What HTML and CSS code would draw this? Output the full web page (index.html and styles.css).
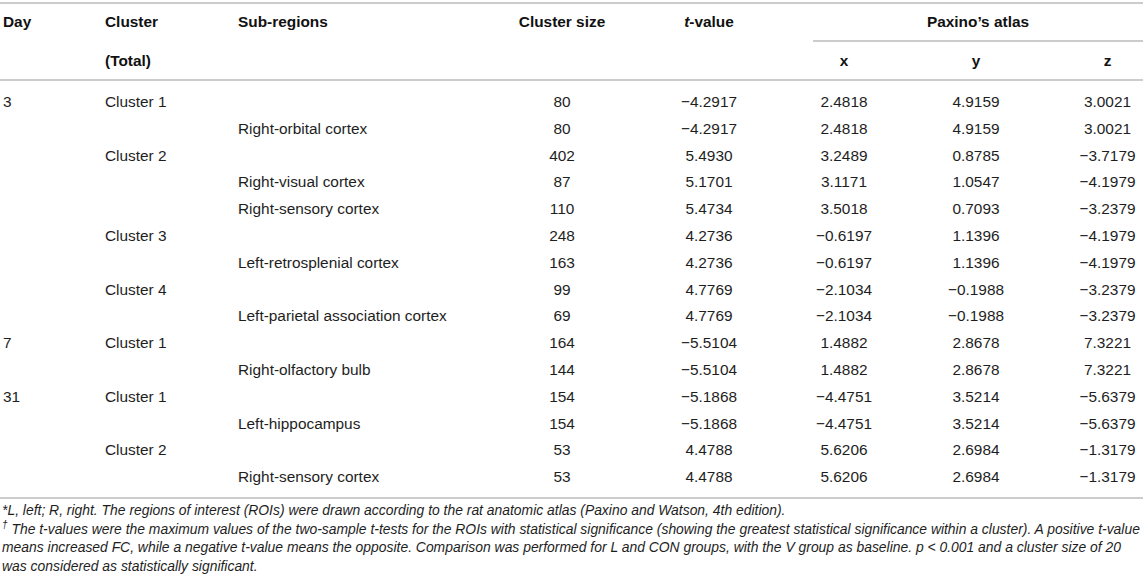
FILE: index.html
```html
<!DOCTYPE html>
<html lang="en">
<head>
<meta charset="utf-8">
<title>Table</title>
<link rel="stylesheet" href="styles.css">
</head>
<body>
<table class="data">
  <colgroup>
    <col class="c-day"><col class="c-cluster"><col class="c-sub"><col class="c-size"><col class="c-t"><col class="c-x"><col class="c-y"><col class="c-z">
  </colgroup>
  <thead>
    <tr class="h1">
      <th class="left pad-day">Day</th>
      <th class="left">Cluster</th>
      <th class="left">Sub-regions</th>
      <th class="ctr">Cluster size</th>
      <th class="ctr col-t"><i>t</i>-value</th>
      <th class="ctr atlas" colspan="3">Paxino’s atlas</th>
    </tr>
    <tr class="h2">
      <th class="left pad-day"></th>
      <th class="left">(Total)</th>
      <th></th>
      <th></th>
      <th class="col-t"></th>
      <th class="ctr col-x">x</th>
      <th class="ctr">y</th>
      <th class="ctr col-z">z</th>
    </tr>
  </thead>
  <tbody>
    <tr><td class="pad-day">3</td><td>Cluster 1</td><td></td><td class="ctr">80</td><td class="ctr col-t">−4.2917</td><td class="ctr col-x">2.4818</td><td class="ctr">4.9159</td><td class="ctr col-z">3.0021</td></tr>
    <tr><td class="pad-day"></td><td></td><td>Right-orbital cortex</td><td class="ctr">80</td><td class="ctr col-t">−4.2917</td><td class="ctr col-x">2.4818</td><td class="ctr">4.9159</td><td class="ctr col-z">3.0021</td></tr>
    <tr><td class="pad-day"></td><td>Cluster 2</td><td></td><td class="ctr">402</td><td class="ctr col-t">5.4930</td><td class="ctr col-x">3.2489</td><td class="ctr">0.8785</td><td class="ctr col-z">−3.7179</td></tr>
    <tr><td class="pad-day"></td><td></td><td>Right-visual cortex</td><td class="ctr">87</td><td class="ctr col-t">5.1701</td><td class="ctr col-x">3.1171</td><td class="ctr">1.0547</td><td class="ctr col-z">−4.1979</td></tr>
    <tr><td class="pad-day"></td><td></td><td>Right-sensory cortex</td><td class="ctr">110</td><td class="ctr col-t">5.4734</td><td class="ctr col-x">3.5018</td><td class="ctr">0.7093</td><td class="ctr col-z">−3.2379</td></tr>
    <tr><td class="pad-day"></td><td>Cluster 3</td><td></td><td class="ctr">248</td><td class="ctr col-t">4.2736</td><td class="ctr col-x">−0.6197</td><td class="ctr">1.1396</td><td class="ctr col-z">−4.1979</td></tr>
    <tr><td class="pad-day"></td><td></td><td>Left-retrosplenial cortex</td><td class="ctr">163</td><td class="ctr col-t">4.2736</td><td class="ctr col-x">−0.6197</td><td class="ctr">1.1396</td><td class="ctr col-z">−4.1979</td></tr>
    <tr><td class="pad-day"></td><td>Cluster 4</td><td></td><td class="ctr">99</td><td class="ctr col-t">4.7769</td><td class="ctr col-x">−2.1034</td><td class="ctr">−0.1988</td><td class="ctr col-z">−3.2379</td></tr>
    <tr><td class="pad-day"></td><td></td><td>Left-parietal association cortex</td><td class="ctr">69</td><td class="ctr col-t">4.7769</td><td class="ctr col-x">−2.1034</td><td class="ctr">−0.1988</td><td class="ctr col-z">−3.2379</td></tr>
    <tr><td class="pad-day">7</td><td>Cluster 1</td><td></td><td class="ctr">164</td><td class="ctr col-t">−5.5104</td><td class="ctr col-x">1.4882</td><td class="ctr">2.8678</td><td class="ctr col-z">7.3221</td></tr>
    <tr><td class="pad-day"></td><td></td><td>Right-olfactory bulb</td><td class="ctr">144</td><td class="ctr col-t">−5.5104</td><td class="ctr col-x">1.4882</td><td class="ctr">2.8678</td><td class="ctr col-z">7.3221</td></tr>
    <tr><td class="pad-day">31</td><td>Cluster 1</td><td></td><td class="ctr">154</td><td class="ctr col-t">−5.1868</td><td class="ctr col-x">−4.4751</td><td class="ctr">3.5214</td><td class="ctr col-z">−5.6379</td></tr>
    <tr><td class="pad-day"></td><td></td><td>Left-hippocampus</td><td class="ctr">154</td><td class="ctr col-t">−5.1868</td><td class="ctr col-x">−4.4751</td><td class="ctr">3.5214</td><td class="ctr col-z">−5.6379</td></tr>
    <tr><td class="pad-day"></td><td>Cluster 2</td><td></td><td class="ctr">53</td><td class="ctr col-t">4.4788</td><td class="ctr col-x">5.6206</td><td class="ctr">2.6984</td><td class="ctr col-z">−1.3179</td></tr>
    <tr><td class="pad-day"></td><td></td><td>Right-sensory cortex</td><td class="ctr">53</td><td class="ctr col-t">4.4788</td><td class="ctr col-x">5.6206</td><td class="ctr">2.6984</td><td class="ctr col-z">−1.3179</td></tr>
  </tbody>
</table>
<div class="notes">
  <p>*L, left; R, right. The regions of interest (ROIs) were drawn according to the rat anatomic atlas (Paxino and Watson, 4th edition).</p>
  <p><span class="dagger">†</span> The t-values were the maximum values of the two-sample t-tests for the ROIs with statistical significance (showing the greatest statistical significance within a cluster). A positive t-value means increased FC, while a negative t-value means the opposite. Comparison was performed for L and CON groups, with the V group as baseline. p &lt; 0.001 and a cluster size of 20 was considered as statistically significant.</p>
</div>
</body>
</html>
```

FILE: styles.css
```css
html, body {
  margin: 0;
  padding: 0;
  background: #ffffff;
}

body {
  font-family: "Liberation Sans", Arial, sans-serif;
  color: #1e1e1e;
  width: 1143px;
}

.data {
  width: 1143px;
  margin-top: 2px;
  border-collapse: separate;
  border-spacing: 0;
  table-layout: fixed;
  font-size: 15.4px;
}

.c-day { width: 105px; }
.c-cluster { width: 133px; }
.c-sub { width: 252px; }
.c-size { width: 144px; }
.c-t { width: 179px; }
.c-x { width: 97px; }
.c-y { width: 132px; }
.c-z { width: 101px; }

th, td {
  padding: 0;
  white-space: nowrap;
  vertical-align: middle;
}

th {
  font-weight: bold;
  color: #111111;
}

.left { text-align: left; }
.ctr { text-align: center; }
.pad-day { padding-left: 3px; }
.col-t { padding-right: 29px; }
.col-x { padding-right: 35px; }
.col-z { padding-left: 30px; }

thead .h1 th {
  border-top: 2px solid #cccccc;
  border-bottom: 2px solid transparent;
  height: 36px;
  line-height: 36px;
}

thead .h1 th.atlas {
  border-bottom-color: #cccccc;
}

thead .h2 th {
  border-bottom: 2px solid #cccccc;
  height: 37px;
  line-height: 37px;
}

tbody td {
  height: 26.8px;
  line-height: 26.8px;
}

tbody tr:first-child td {
  padding-top: 8px;
}

tbody tr:last-child td {
  padding-bottom: 6px;
  border-bottom: 2px solid #cccccc;
}

.notes {
  padding: 2px 0 0 2px;
  font-size: 13.9px;
  font-style: italic;
  line-height: 18.7px;
  color: #1e1e1e;
}

.notes p {
  margin: 0;
}

.notes .dagger {
  display: inline-block;
  font-size: 10px;
  line-height: 10px;
  vertical-align: top;
}
```
